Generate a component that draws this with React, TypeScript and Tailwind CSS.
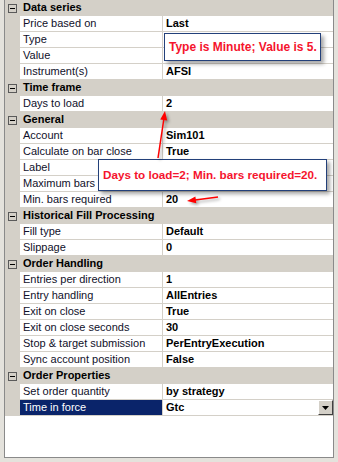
import React from 'react';

type Row = [string, string];
type Section = { title: string; rows: Row[] };

const SECTIONS: Section[] = [
  {
    title: 'Data series',
    rows: [
      ['Price based on', 'Last'],
      ['Type', ''],
      ['Value', ''],
      ['Instrument(s)', 'AFSI'],
    ],
  },
  { title: 'Time frame', rows: [['Days to load', '2']] },
  {
    title: 'General',
    rows: [
      ['Account', 'Sim101'],
      ['Calculate on bar close', 'True'],
      ['Label', ''],
      ['Maximum bars', ''],
      ['Min. bars required', '20'],
    ],
  },
  {
    title: 'Historical Fill Processing',
    rows: [
      ['Fill type', 'Default'],
      ['Slippage', '0'],
    ],
  },
  {
    title: 'Order Handling',
    rows: [
      ['Entries per direction', '1'],
      ['Entry handling', 'AllEntries'],
      ['Exit on close', 'True'],
      ['Exit on close seconds', '30'],
      ['Stop & target submission', 'PerEntryExecution'],
      ['Sync account position', 'False'],
    ],
  },
  {
    title: 'Order Properties',
    rows: [
      ['Set order quantity', 'by strategy'],
      ['Time in force', 'Gtc'],
    ],
  },
];

function CollapseBox() {
  return (
    <div className="mt-[4px] ml-[3px] w-[9px] h-[9px] border border-[#5a5a5a] flex items-center justify-center">
      <div className="w-[5px] h-px bg-black" />
    </div>
  );
}

function CategoryRow({ title }: { title: string }) {
  return (
    <div className="flex h-[16px] bg-[#d4d0c8]">
      <div className="w-[15px] shrink-0">
        <CollapseBox />
      </div>
      <div className="pl-[3px] font-bold leading-[15px] text-black">{title}</div>
    </div>
  );
}

function PropRow({ name, value, selected }: { name: string; value: string; selected?: boolean }) {
  return (
    <div className="flex h-[16px]">
      <div className="w-[15px] shrink-0 bg-[#d4d0c8]" />
      <div
        className={
          selected
            ? 'w-[143px] shrink-0 pl-[3px] leading-[15px] bg-[#0a246a] text-white border-r border-b border-[#d4d0c8]'
            : 'w-[143px] shrink-0 pl-[3px] leading-[15px] bg-white text-[#10102a] border-r border-b border-[#d4d0c8]'
        }
      >
        {name}
      </div>
      <div className="flex-1 flex pl-[3px] leading-[15px] font-bold text-black bg-white border-b border-[#d4d0c8]">
        <span>{value}</span>
        {selected && (
          <div className="ml-auto w-[15px] h-[15px] bg-[#d4d0c8] border-t border-l border-t-white border-l-white border-r border-b border-r-[#404040] border-b-[#404040] flex items-center justify-center">
            <svg width="7" height="4" viewBox="0 0 7 4">
              <polygon points="0,0 7,0 3.5,4" fill="#000" />
            </svg>
          </div>
        )}
      </div>
    </div>
  );
}

export default function App() {
  return (
    <div className="relative w-[338px] h-[462px] overflow-hidden bg-[#e4e2dc] font-['Liberation_Sans',Arial,sans-serif] text-[11px]">
      <div className="ml-[4px] w-[330px] h-[458px] bg-white border-l border-r border-b border-[#8a8a8a]">
        {SECTIONS.map((s) => (
          <div key={s.title}>
            <CategoryRow title={s.title} />
            {s.rows.map(([n, v]) => (
              <PropRow key={n} name={n} value={v} selected={n === 'Time in force'} />
            ))}
          </div>
        ))}
      </div>

      {/* annotation callouts */}
      <div className="absolute left-[164px] top-[33px] w-[157px] h-[28px] bg-white border-[1.5px] border-[#23407a] shadow-[3px_3px_4px_rgba(0,0,0,0.35)] flex items-center pl-[4px] text-[12px] font-bold text-[#f5142d]">
        Type is Minute; Value is 5.
      </div>
      <div className="absolute left-[98px] top-[159px] w-[229px] h-[32px] bg-white border-[1.5px] border-[#23407a] shadow-[3px_3px_4px_rgba(0,0,0,0.35)] flex items-center pl-[4px] text-[11.7px] font-bold text-[#f5142d] whitespace-nowrap">
        Days to load=2; Min. bars required=20.
      </div>

      <svg className="absolute inset-0 pointer-events-none" width="338" height="462" viewBox="0 0 338 462">
        <g style={{ filter: 'drop-shadow(2px 2px 1.5px rgba(0,0,0,0.35))' }}>
          <line x1="158" y1="158" x2="164" y2="118" stroke="#ff0000" strokeWidth="1.5" />
          <polygon points="165,111 167.2,120.4 160.2,119.4" fill="#ff0000" />
          <line x1="218" y1="197" x2="195" y2="200" stroke="#ff0000" strokeWidth="1.5" />
          <polygon points="187,201 196.3,203.3 195.4,196.4" fill="#ff0000" />
        </g>
      </svg>
    </div>
  );
}
